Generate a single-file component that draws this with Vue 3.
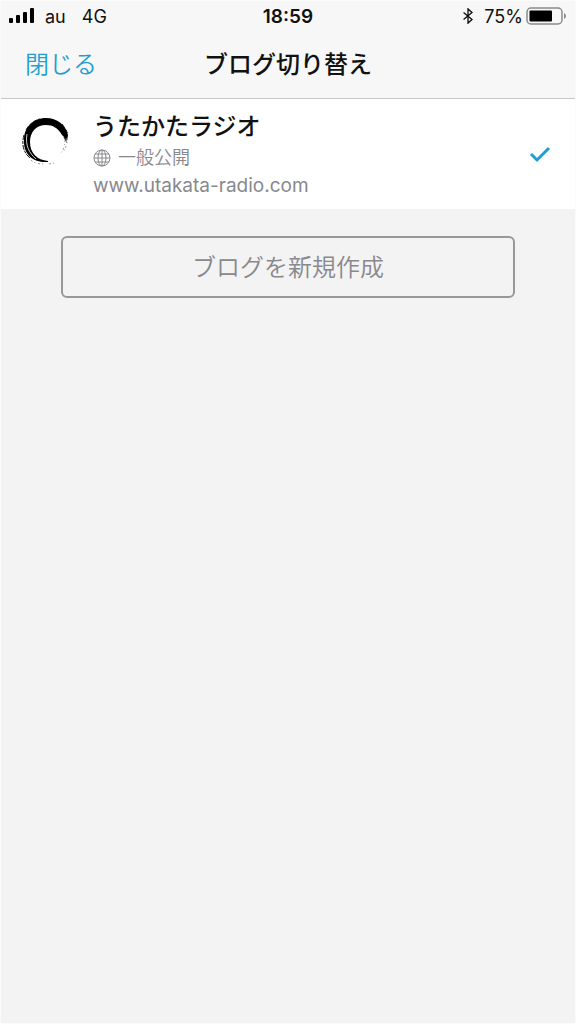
<template>
  <div class="screen">
    <header class="header">
      <div class="status-bar">
        <div class="status-left">
          <svg class="signal" viewBox="0 0 26 16" aria-hidden="true">
            <rect x="0" y="10" width="4" height="5" rx="1" />
            <rect x="7" y="7" width="4" height="8" rx="1" />
            <rect x="14" y="4" width="4" height="11" rx="1" />
            <rect x="21" y="0" width="4" height="15" rx="1" />
          </svg>
          <span>au</span>
          <span class="network">4G</span>
        </div>
        <span class="clock">18:59</span>
        <div class="status-right">
          <svg class="bluetooth" viewBox="0 0 12 18" aria-hidden="true">
            <path d="M1 5 L10.5 13 L6 17 V1 L10.5 5 L1 13" />
          </svg>
          <span>{{ battery }}%</span>
          <svg class="battery" viewBox="0 0 41 18" aria-hidden="true">
            <rect class="battery-case" x="1" y="1" width="35" height="16" rx="4" />
            <rect x="3.5" y="3.5" :width="battery * 0.3" height="11" rx="1" />
            <path class="battery-tip" d="M38 6 Q40 7 40 9 Q40 11 38 12 Z" />
          </svg>
        </div>
      </div>
      <nav class="nav-bar">
        <button type="button" class="close-button">閉じる</button>
        <h1>ブログ切り替え</h1>
      </nav>
    </header>

    <main>
      <ul class="blog-list">
        <li v-for="blog in blogs" :key="blog.url">
          <button type="button" class="blog" @click="selectBlog(blog)">
            <svg class="blog-icon" viewBox="0 0 48 48" aria-hidden="true">
              <!-- Main brush stroke, thick at the top and thin at the bottom -->
              <path d="M27 45 C13 46 3 38 3 25 C2 11 12 1 25 1 C36 1 45 8 47 18 L46 24 L43 20 L41 18 C37 11 32 8 25 8 C15 8 9 15 9 25 C9 36 16 43 27 44 Z" />
              <path class="gap" d="M6 17 C4 28 8 36 15 42" />
              <path class="dry" d="M3 18 C0 28 3 36 9 41 M41 7 L47 16 M43 20 L46 26 M5 13 C8 7 14 3 19 2" />
              <path class="bristle" d="M44 23 C44 30 42 33 40 36 M46 21 C46 27 45 30 43 34 M10 43 C14 47 20 47 25 47 M28 47 L34 46" />
            </svg>
            <span class="blog-info">
              <span class="blog-name">{{ blog.name }}</span>
              <span class="blog-status">
                <svg class="globe" viewBox="0 0 18 18" aria-hidden="true">
                  <circle cx="9" cy="9" r="8" />
                  <ellipse cx="9" cy="9" rx="4" ry="8" />
                  <path d="M9 1 V17 M1 9 H17 M2 5 H16 M2 13 H16" />
                </svg>
                <span>{{ blog.status }}</span>
              </span>
              <span class="blog-url">{{ blog.url }}</span>
            </span>
            <svg v-if="blog.url === selected" class="check" viewBox="0 0 22 18" aria-hidden="true">
              <path d="M2 9 L8 15 L20 3" />
            </svg>
          </button>
        </li>
      </ul>
      <div class="actions">
        <button type="button" class="create-button">ブログを新規作成</button>
      </div>
    </main>
  </div>
</template>

<script setup>
import { ref } from 'vue';

const battery = ref(75);

const blogs = ref([
  { name: 'うたかたラジオ', status: '一般公開', url: 'www.utakata-radio.com' },
]);

const selected = ref('www.utakata-radio.com');

// Switch to the tapped blog
const selectBlog = (blog) => {
  selected.value = blog.url;
};
</script>

<style>
body {
  background-color: #f3f3f3;
}
</style>

<style scoped>
.screen {
  box-sizing: border-box;
  min-height: 100vh;
  border: 1px solid #fbfbfb;
  background-color: #f3f3f3;
  color: #111;
  font-family: Inter, "Noto Sans CJK JP", sans-serif;
}

button {
  margin: 0;
  padding: 0;
  border: none;
  background: none;
  color: inherit;
  font-family: inherit;
  cursor: pointer;
}

.header {
  border-bottom: 1px solid #c4c4c6;
  background-color: #f7f7f7;
}

.status-bar {
  display: grid;
  grid-template-columns: 1fr auto 1fr;
  align-items: center;
  height: 30px;
  padding: 0 8px;
  font-size: 18px;
}

.status-left,
.status-right {
  display: flex;
  align-items: center;
}

.status-right {
  justify-content: flex-end;
}

.signal {
  width: 26px;
  height: 16px;
  margin-right: 10px;
}

.network {
  margin-left: 16px;
}

.clock {
  font-size: 19px;
  font-weight: 600;
}

.bluetooth {
  width: 12px;
  height: 16px;
  margin-right: 10px;
  fill: none;
  stroke: #111;
  stroke-width: 1.5;
}

.battery {
  width: 41px;
  height: 18px;
  margin-left: 3px;
}

.battery-case {
  fill: none;
  stroke: #8a8a8c;
  stroke-width: 1.5;
}

.battery-tip {
  fill: #8a8a8c;
}

.nav-bar {
  display: grid;
  grid-template-columns: 1fr auto 1fr;
  align-items: center;
  height: 67px;
  box-sizing: border-box;
  padding: 0 24px 4px;
}

.close-button {
  justify-self: start;
  color: #209fd0;
  font-size: 24px;
  font-weight: 350;
}

h1 {
  margin: 0;
  font-size: 24px;
  font-weight: 500;
}

.blog-list {
  margin: 0;
  padding: 0;
  background-color: #fff;
  list-style: none;
}

.blog {
  display: flex;
  align-items: center;
  width: 100%;
  height: 110px;
  padding: 0 24px 0 20px;
  text-align: left;
}

.blog-icon {
  align-self: flex-start;
  width: 48px;
  height: 48px;
  margin: 18px 24px 0 0;
}

.gap {
  fill: none;
  stroke: #fff;
  stroke-width: 0.8;
}

.dry {
  fill: none;
  stroke: #111;
  stroke-width: 1;
  stroke-dasharray: 5 1 3 1;
}

.bristle {
  fill: none;
  stroke: #999;
  stroke-width: 1;
  stroke-dasharray: 2 2 1 3;
}

.blog-info {
  display: flex;
  flex: 1;
  flex-direction: column;
  padding-top: 2px;
  color: #88888d;
  font-size: 18px;
}

.blog-name {
  color: #111;
  font-size: 24px;
  font-weight: 500;
  line-height: 34px;
}

.blog-status {
  display: flex;
  align-items: center;
  gap: 7px;
  font-weight: 350;
  line-height: 28px;
}

.globe {
  width: 18px;
  height: 18px;
  fill: none;
  stroke: #88888d;
  stroke-width: 1;
}

.blog-url {
  font-size: 19px;
  line-height: 28px;
}

.check {
  width: 22px;
  height: 18px;
  fill: none;
  stroke: #209fd0;
  stroke-width: 3;
}

.actions {
  padding: 27px 60px;
}

.create-button {
  width: 100%;
  height: 62px;
  padding-bottom: 4px;
  border: 2px solid #98989c;
  border-radius: 6px;
  color: #88888d;
  font-size: 24px;
  font-weight: 350;
}
</style>
